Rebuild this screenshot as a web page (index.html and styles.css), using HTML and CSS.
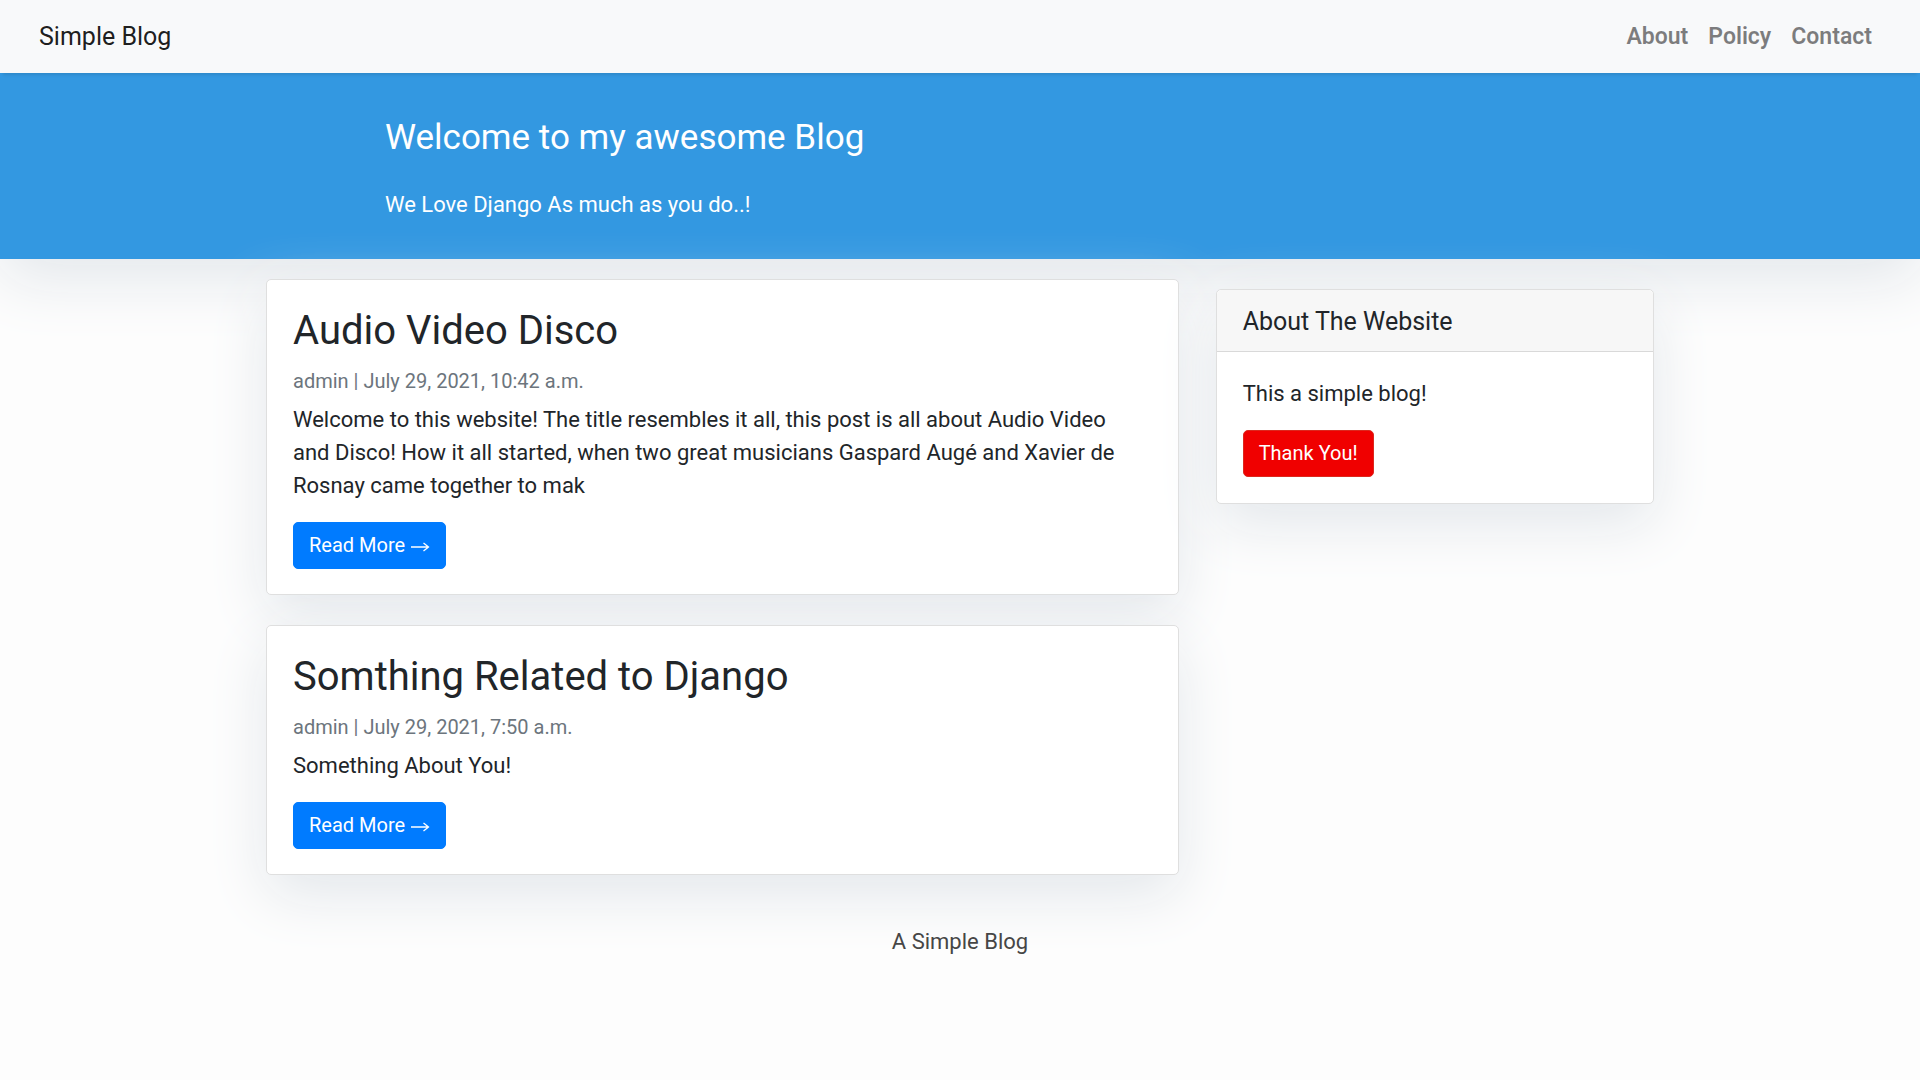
FILE: index.html
```html
<!DOCTYPE html>
<html lang="en">
<head>
<meta charset="utf-8">
<meta name="viewport" content="width=device-width, initial-scale=1">
<title>Simple Blog</title>
<link rel="stylesheet" href="styles.css">
</head>
<body>
<nav class="navbar">
  <a class="brand" href="#">Simple Blog</a>
  <ul class="nav-links">
    <li><a href="#">About</a></li>
    <li><a href="#">Policy</a></li>
    <li><a href="#">Contact</a></li>
  </ul>
</nav>
<header class="masthead">
  <div class="masthead-inner">
    <h1>Welcome to my awesome Blog</h1>
    <p>We Love Django As much as you do..!</p>
  </div>
</header>
<div class="container">
  <main class="posts">
    <article class="card">
      <h2 class="post-title">Audio Video Disco</h2>
      <p class="meta">admin | July 29, 2021, 10:42 a.m.</p>
      <p class="text">Welcome to this website! The title resembles it all, this post is all about Audio Video and Disco! How it all started, when two great musicians Gaspard Augé and Xavier de Rosnay came together to mak</p>
      <a class="btn" href="#">Read More <svg class="arrow" viewBox="0 0 20 10" aria-hidden="true"><path d="M1 5H18M13.5 1L18.5 5L13.5 9"/></svg></a>
    </article>
    <article class="card">
      <h2 class="post-title">Somthing Related to Django</h2>
      <p class="meta">admin | July 29, 2021, 7:50 a.m.</p>
      <p class="text">Something About You!</p>
      <a class="btn" href="#">Read More <svg class="arrow" viewBox="0 0 20 10" aria-hidden="true"><path d="M1 5H18M13.5 1L18.5 5L13.5 9"/></svg></a>
    </article>
  </main>
  <aside class="sidebar">
    <section class="widget">
      <h5 class="widget-title">About The Website</h5>
      <div class="widget-body">
        <p class="text">This a simple blog!</p>
        <a class="btn btn-danger" href="#">Thank You!</a>
      </div>
    </section>
  </aside>
</div>
<footer class="footer"><p>A Simple Blog</p></footer>
</body>
</html>
```
FILE: styles.css
```css
* { box-sizing: border-box; }

body {
  margin: 0;
  font-family: Roboto, sans-serif;
  font-size: 22px;
  line-height: 33px;
  color: #212529;
  background: #fdfdfd;
}

h1, h2, h5, p, ul { margin: 0; font-weight: 400; }
a { text-decoration: none; }

.navbar {
  position: relative;
  z-index: 1;
  display: flex;
  justify-content: space-between;
  align-items: center;
  padding: 20px 48px 20px 39px;
  background: #f8f9fa;
  box-shadow: 0 5px 3px -3px rgba(0, 0, 0, .1);
}

.brand { font-size: 25px; color: rgba(0, 0, 0, .9); }

.nav-links {
  display: flex;
  gap: 20px;
  padding: 0;
  list-style: none;
}

.nav-links a { font-size: 23px; font-weight: 600; color: rgba(0, 0, 0, .5); }

.masthead {
  padding: 42px 19px 38px;
  color: #fff;
  background: #3398e1;
  box-shadow: 0 20px 60px #e3e7eb;
}

.masthead-inner { max-width: 1150px; margin: 0 auto; }
.masthead h1 { margin-bottom: 28px; font-size: 35px; line-height: 45px; }

.container {
  display: flex;
  max-width: 1426px;
  margin: 0 auto;
}

.posts { width: 66.6667%; padding: 20px 19px 0; }
.sidebar { width: 33.3333%; padding: 30px 19px 0 18px; }

.card, .widget {
  border: 1px solid #dfdfdf;
  border-radius: 5px;
  background: #fff;
  box-shadow: 0 20px 60px #e3e7eb;
}

.card { margin-bottom: 30px; padding: 25px 26px; }

.post-title { margin-bottom: 8px; font-size: 40px; line-height: 52px; }
.meta { margin-bottom: 6px; font-size: 20px; line-height: 32px; color: #6c757d; }
.text { max-width: 840px; margin-bottom: 20px; }

.btn {
  display: block;
  width: fit-content;
  padding: 8px 15px;
  border: 1px solid #007bff;
  border-radius: 5px;
  font-size: 20px;
  line-height: 29px;
  color: #fff;
  background: #007bff;
}

.arrow {
  width: 20px;
  height: 10px;
  fill: none;
  stroke: currentColor;
  stroke-width: 1.3;
}

.btn-danger { border-color: #dc281e; background: #f00000; }

.widget-title {
  padding: 16px 26px 14px;
  border-bottom: 1px solid #d9d9d9;
  border-radius: 5px 5px 0 0;
  font-size: 25px;
  line-height: 31px;
  background: #f7f7f7;
}

.widget-body { padding: 25px 26px 26px; }

.footer {
  padding: 20px;
  text-align: center;
  color: #464646;
}
```
